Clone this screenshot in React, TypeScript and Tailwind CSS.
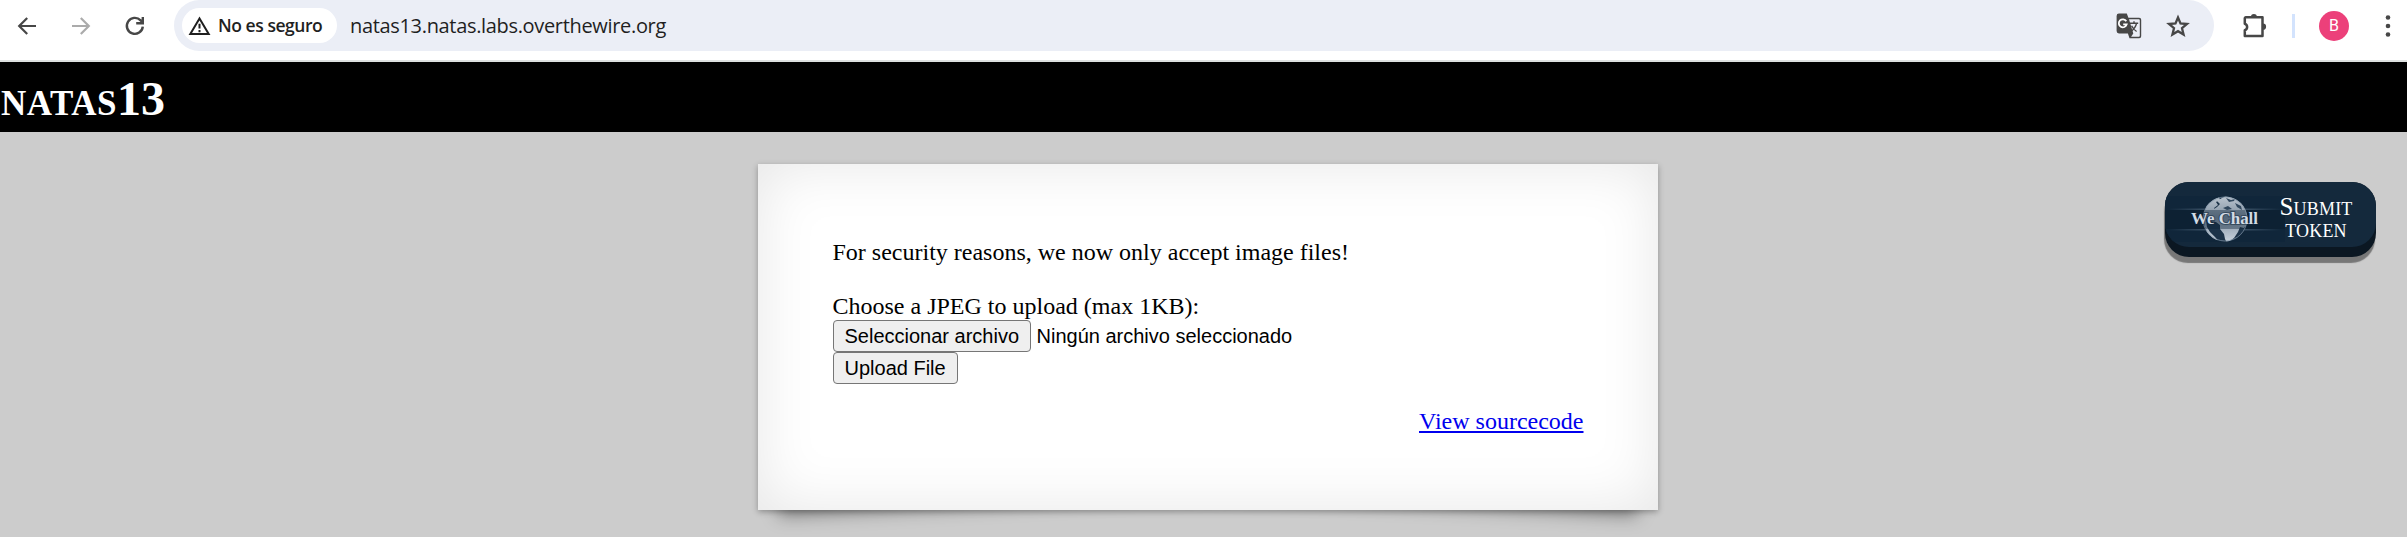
import React from "react";

function BackIcon() {
  return (
    <svg className="ml-[15px]" width="24" height="24" viewBox="0 0 24 24" fill="none" stroke="#474747" strokeWidth="2.2">
      <path d="M21 12H4.5M12.2 4L4.2 12l8 8" />
    </svg>
  );
}

function ForwardIcon() {
  return (
    <svg className="ml-[30px]" width="24" height="24" viewBox="0 0 24 24" fill="none" stroke="#ababab" strokeWidth="2.2">
      <path d="M3 12h16.5M11.8 4l8 8-8 8" />
    </svg>
  );
}

function ReloadIcon() {
  return (
    <svg className="ml-[30px]" width="24" height="24" viewBox="0 0 24 24" fill="none" stroke="#474747" strokeWidth="2.4">
      <path d="M19.8 12.6a8 8 0 1 1-2.2-6.3l2.6 2.6M19.8 3v6.3h-6.6" />
    </svg>
  );
}

function TranslateIcon() {
  return (
    <svg width="26" height="26" viewBox="0 0 26 26" fill="none">
      <path d="M3 0.5h7.8l1.6 4.2h10.8a2 2 0 0 1 2 2v16.5a2 2 0 0 1-2 2H13.5l-1.6-4.7H3a2.4 2.4 0 0 1-2.4-2.4V2.9A2.4 2.4 0 0 1 3 .5z" fill="#474747" />
      <path d="M13 6.2h9.8a1 1 0 0 1 1 1v15.5a1 1 0 0 1-1 1h-7.7l2.2-3.3z" fill="#ebeef6" />
      <path d="M13.6 10.2h8.6M18 8.2v2M20.5 10.4c-.7 3.6-3 6.2-5.5 8M15.6 12.8c1 2.3 2.9 4.4 5 5.7" stroke="#474747" strokeWidth="1.4" />
      <path d="M10.3 8.3A4 4 0 1 0 10.7 11.3H7.2" stroke="#fff" strokeWidth="1.8" />
    </svg>
  );
}

function StarIcon() {
  return (
    <svg className="ml-[23px]" width="26" height="26" viewBox="0 0 26 26" fill="none" stroke="#474747" strokeWidth="2.3">
      <path d="M13 4.5l2.5 6 6.5.5-5 4.2 1.600 6.400L13 18.200l-5.600 3.400L9 15.200 4 11l6.500-.500z" />
    </svg>
  );
}

function PuzzleIcon() {
  return (
    <svg width="26" height="26" viewBox="0 0 26 26">
      <path d="M3.800 4.300H20.500V23H2.800V17.300a3.500 3.500 0 0 0 0-6.600V5.300a1 1 0 0 1 1-1z" fill="none" stroke="#474747" strokeWidth="2.500" strokeLinejoin="round" />
      <path d="M8.900 4a3 3 0 0 1 6 0zM21 10.600a3.100 3.100 0 0 1 0 6.200z" fill="#474747" />
    </svg>
  );
}

function Toolbar() {
  return (
    <header className="flex h-[62px] items-start border-b-2 border-[#dee1e0] bg-white font-['Open_Sans',sans-serif] text-[#1f1f1f]">
      <div className="flex h-[51px] w-[174px] shrink-0 items-center">
        <BackIcon />
        <ForwardIcon />
        <ReloadIcon />
      </div>
      <div className="flex h-[51px] w-[2040px] shrink-0 items-center rounded-full bg-[#ebeef6] pl-[8px]">
        <div className="flex h-[35px] w-[155px] items-center rounded-full bg-white pl-[6px]">
          <svg width="23" height="20" viewBox="0 0 23 20" fill="none" stroke="#1f1f1f" strokeWidth="2">
            <path d="M11.500 2.500L2.300 18h18.400zM11.500 7.800v4.800M11.500 14v2.200" />
          </svg>
          <span className="ml-[7px] whitespace-nowrap text-[17.5px] font-semibold tracking-[-0.45px]">No es seguro</span>
        </div>
        <span className="ml-[13px] whitespace-nowrap text-[20px] tracking-[-0.33px]">natas13.natas.labs.overthewire.org</span>
        <div className="ml-auto flex items-center pr-[23px]">
          <TranslateIcon />
          <StarIcon />
        </div>
      </div>
      <div className="flex h-[51px] items-center pl-[28px]">
        <PuzzleIcon />
        <div className="ml-[24px] h-[24px] w-[3px] bg-[#d3e3fd]" />
        <div className="ml-[24px] flex size-[30px] items-center justify-center rounded-full bg-[#ec407a] font-[Roboto,sans-serif] text-[16px] text-white">B</div>
        <svg className="ml-[34px]" width="10" height="26" viewBox="0 0 10 26" fill="#474747">
          <circle cx="5" cy="4.500" r="2.300" />
          <circle cx="5" cy="13" r="2.300" />
          <circle cx="5" cy="21.500" r="2.300" />
        </svg>
      </div>
    </header>
  );
}

function WeChallLogo() {
  return (
    <svg className="shrink-0" width="120" height="46" viewBox="0 0 120 46">
      <defs>
        <clipPath id="globe">
          <circle cx="60" cy="23" r="22.500" />
        </clipPath>
        <linearGradient id="streak">
          <stop offset="0" stopColor="#7890a6" stopOpacity="0" />
          <stop offset="0.500" stopColor="#7890a6" />
          <stop offset="1" stopColor="#7890a6" stopOpacity="0" />
        </linearGradient>
        <linearGradient id="land" x1="0" y1="0" x2="0" y2="1">
          <stop offset="0" stopColor="#bcc6d0" />
          <stop offset="0.450" stopColor="#8292a3" />
          <stop offset="1" stopColor="#ccd6e0" />
        </linearGradient>
      </defs>
      <rect width="120" height="46" fill="#10263a" />
      <rect y="14" width="120" height="19" fill="#0d2133" />
      <rect x="4" y="12.500" width="112" height="1.500" fill="url(#streak)" opacity="0.600" />
      <rect x="4" y="33" width="112" height="1.500" fill="url(#streak)" opacity="0.600" />
      <g clipPath="url(#globe)">
        <rect x="36" width="48" height="46" fill="#1c3349" />
        <path d="M57 2l4-2 9 1 8 6 6 9v9l-5 7-4-1-2 5-4 6-7 5-2-4-1-5-4-5v-4l-4-3-6-1-2-5 3-5 6-4 3-3-3-3zM41 9l8-7 5-1 1 3-4 2 2 3-4 3 1 3-6 3-3 6 1 7 3 5 5 5 4 5-3-1-9-8-4-13z" fill="url(#land)" />
        <path d="M61 2l5 2 4-1-1 2-5 1zM70 7l6 3 1 4-5-3zM58 12l5-2 4 3-5 1z" fill="#30475d" />
        <rect x="36" y="14" width="48" height="19" fill="#0f2539" opacity="0.400" />
      </g>
      <circle cx="60" cy="23" r="22" fill="none" stroke="#8497aa" strokeWidth="1" opacity="0.700" />
      <text x="26" y="28" textLength="67" lengthAdjust="spacingAndGlyphs" fill="#d2dbe4" stroke="#10263a" strokeWidth="2" strokeOpacity="0.500" paintOrder="stroke" fontFamily="Liberation Serif, serif" fontWeight="700" fontSize="17">We Chall</text>
    </svg>
  );
}

function SubmitToken() {
  return (
    <button className="ml-[507px] mt-[18px] flex h-[75px] w-[211px] shrink-0 rounded-[24px] bg-[#0b1722] shadow-[-1px_6px_1px_#777777]">
      <span className="flex h-[65px] w-[211px] items-start overflow-hidden rounded-[24px] bg-[#14293c] pt-[14px]">
        <WeChallLogo />
        <span className="-ml-[7px] w-[76px] shrink-0 text-center text-[25px] leading-[22px] tracking-[0.2px] text-white [font-variant-caps:small-caps]">Submit token</span>
      </span>
    </button>
  );
}

const chooser =
  "h-[32px] rounded-[4px] border border-[#767676] bg-[#efefef] px-[11px] text-[20px] leading-[29px] whitespace-nowrap";

export default function App() {
  return (
    <div className="h-[537px] w-[2407px] overflow-hidden bg-[#cccccc] font-['Liberation_Serif',serif] text-[24px] leading-[27px] text-black">
      <Toolbar />
      <h1 className="h-[70px] bg-black pl-px text-[48px] font-bold leading-[73px] text-white [font-variant-caps:small-caps]"><span className="text-[50px] tracking-[0.5px]">natas</span>13</h1>
      <main className="flex items-start pl-[758px] pt-[32px]">
        <section className="relative isolate h-[346px] w-[900px] shrink-0">
          <div className="absolute bottom-[24px] left-[18px] -z-10 h-[69px] w-[450px] -rotate-3 shadow-[0_18px_18px_rgba(0,0,0,0.4)]" />
          <div className="absolute bottom-[24px] right-[18px] -z-10 h-[69px] w-[450px] rotate-3 shadow-[0_18px_18px_rgba(0,0,0,0.4)]" />
          <div className="h-full bg-white px-[74.5px] py-[75px] shadow-[0_1.5px_6px_rgba(0,0,0,0.3),inset_0_0_60px_rgba(0,0,0,0.1)]">
            <p className="mb-[27px]">For security reasons, we now only accept image files!</p>
            <form className="font-['Liberation_Sans',sans-serif]" onSubmit={(e) => e.preventDefault()}>
              <p className="font-['Liberation_Serif',serif]">Choose a JPEG to upload (max 1KB):</p>
              <div className="flex items-center">
                <button type="button" className={`w-[198px] ${chooser}`}>Seleccionar archivo</button>
                <span className="ml-[6px] text-[20px] leading-[32px]">Ningún archivo seleccionado</span>
              </div>
              <button type="submit" className={`block w-[125px] ${chooser}`}>Upload File</button>
            </form>
            <div className="mt-[24px] text-right">
              <a href="#source" className="text-[#0000ee] underline decoration-2 underline-offset-[2px]">View sourcecode</a>
            </div>
          </div>
        </section>
        <SubmitToken />
      </main>
    </div>
  );
}
